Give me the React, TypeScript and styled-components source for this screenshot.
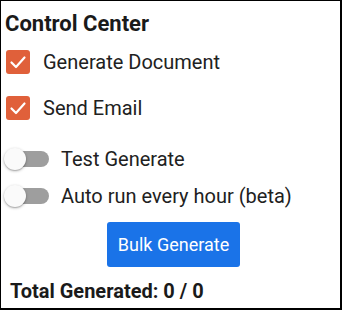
import React, { useState } from 'react';
import styled, { createGlobalStyle } from 'styled-components';

const GlobalStyle = createGlobalStyle`
  body {
    margin: 0;
    background: #fff;
    font-family: Roboto, "Liberation Sans", sans-serif;
    color: #212121;
  }
`

export default function App() {
  const [generateDoc, setGenerateDoc] = useState<boolean>(true)
  const [sendEmail, setSendEmail] = useState<boolean>(true)
  const [testGenerate, setTestGenerate] = useState<boolean>(false)
  const [autoRun, setAutoRun] = useState<boolean>(false)

  return (
    <>
      <GlobalStyle />
      <Panel>
        <Title>Control Center</Title>
        <CheckRow onClick={() => setGenerateDoc(!generateDoc)}>
          <Checkbox checked={generateDoc} />
          <Label>Generate Document</Label>
        </CheckRow>
        <CheckRow onClick={() => setSendEmail(!sendEmail)}>
          <Checkbox checked={sendEmail} />
          <Label>Send Email</Label>
        </CheckRow>
        <Switches>
          <SwitchRow onClick={() => setTestGenerate(!testGenerate)}>
            <Switch on={testGenerate} />
            <Label>Test Generate</Label>
          </SwitchRow>
          <SwitchRow onClick={() => setAutoRun(!autoRun)}>
            <Switch on={autoRun} />
            <Label>Auto run every hour (beta)</Label>
          </SwitchRow>
        </Switches>
        <ButtonRow>
          <BulkButton>Bulk Generate</BulkButton>
        </ButtonRow>
        <Total>Total Generated: 0 / 0</Total>
      </Panel>
    </>
  )
}

const Checkbox: React.FC<{ checked: boolean }> = ({ checked }) => (
  <Box checked={checked}>
    {checked && (
      <svg width="24" height="24" viewBox="0 0 24 24">
        <path d="M5.5 12.5 L10 17 L18.5 7.5" fill="none" stroke="#fff" strokeWidth="2.2" strokeLinecap="round" strokeLinejoin="round" />
      </svg>
    )}
  </Box>
)

const Switch: React.FC<{ on: boolean }> = ({ on }) => (
  <SwitchBase>
    <Track on={on} />
    <Thumb on={on} />
  </SwitchBase>
)

const Panel = styled.div`
  box-sizing: border-box;
  width: 342px;
  height: 310px;
  border: solid #000;
  border-width: 1px 2px 2px 1px;
  padding: 10px 0 0 0;
`

const Title = styled.h3`
  margin: 0 0 14px 4px;
  font-size: 22px;
  line-height: 25px;
  font-weight: 700;
  color: #1a1a1a;
`

const CheckRow = styled.div`
  display: flex;
  align-items: center;
  gap: 13px;
  height: 24px;
  padding-left: 5px;
  margin-bottom: 22px;
  cursor: pointer;
`

const Box = styled.span<{ checked: boolean }>`
  display: flex;
  align-items: center;
  justify-content: center;
  width: 24px;
  height: 24px;
  border-radius: 3px;
  background: ${p => p.checked ? '#e0603a' : '#fff'};
  border: ${p => p.checked ? 'none' : '2px solid #757575'};
  box-sizing: border-box;
`

const Label = styled.span`
  font-size: 20px;
  line-height: 24px;
  color: #212121;
`

const Switches = styled.div`
  display: flex;
  flex-direction: column;
  gap: 13px;
  margin-top: 27px;
`

const SwitchRow = styled.div`
  display: flex;
  align-items: center;
  gap: 12px;
  height: 24px;
  cursor: pointer;
`

const SwitchBase = styled.span`
  position: relative;
  width: 48px;
  height: 24px;
  flex-shrink: 0;
`

const Track = styled.span<{ on: boolean }>`
  position: absolute;
  left: 10px;
  top: 4px;
  width: 38px;
  height: 16px;
  border-radius: 8px;
  background: ${p => p.on ? '#f2b09c' : '#9e9e9e'};
`

const Thumb = styled.span<{ on: boolean }>`
  position: absolute;
  top: 1px;
  left: ${p => p.on ? '25px' : '3px'};
  width: 22px;
  height: 22px;
  border-radius: 50%;
  background: ${p => p.on ? '#e0603a' : '#fafafa'};
  box-shadow: 0 1px 3px rgba(0, 0, 0, 0.3), 0 1px 1px rgba(0, 0, 0, 0.14);
`

const ButtonRow = styled.div`
  display: flex;
  justify-content: center;
  padding-left: 6px;
  margin-top: 14px;
`

const BulkButton = styled.button`
  height: 45px;
  padding: 0 11px;
  border: none;
  border-radius: 3px;
  background: #1a73e8;
  color: #fff;
  font-family: Roboto, "Liberation Sans", sans-serif;
  font-size: 18px;
  cursor: pointer;
`

const Total = styled.div`
  margin: 13px 0 0 9px;
  font-size: 20px;
  line-height: 23px;
  font-weight: 700;
  color: #1a1a1a;
`
